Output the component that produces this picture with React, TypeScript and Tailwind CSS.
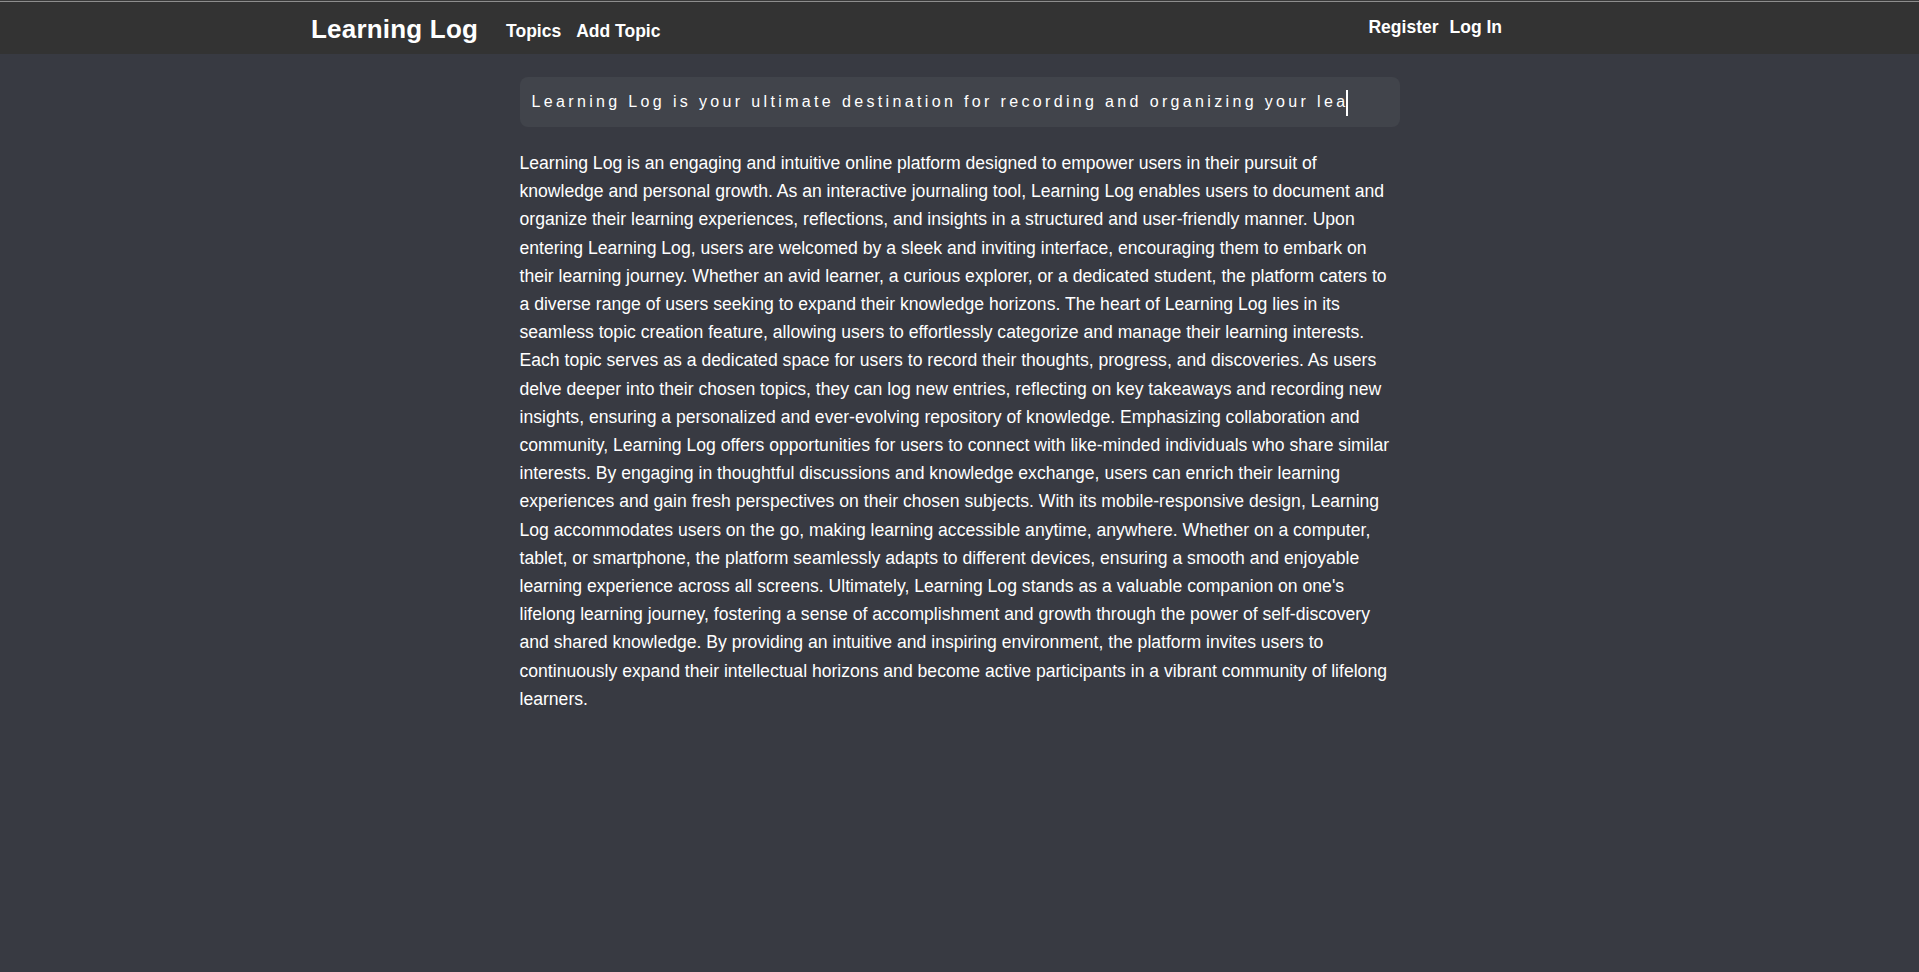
import React from "react";

const para =
  "Learning Log is an engaging and intuitive online platform designed to empower users in their pursuit of knowledge and personal growth. As an interactive journaling tool, Learning Log enables users to document and organize their learning experiences, reflections, and insights in a structured and user-friendly manner. Upon entering Learning Log, users are welcomed by a sleek and inviting interface, encouraging them to embark on their learning journey. Whether an avid learner, a curious explorer, or a dedicated student, the platform caters to a diverse range of users seeking to expand their knowledge horizons. The heart of Learning Log lies in its seamless topic creation feature, allowing users to effortlessly categorize and manage their learning interests. Each topic serves as a dedicated space for users to record their thoughts, progress, and discoveries. As users delve deeper into their chosen topics, they can log new entries, reflecting on key takeaways and recording new insights, ensuring a personalized and ever-evolving repository of knowledge. Emphasizing collaboration and community, Learning Log offers opportunities for users to connect with like-minded individuals who share similar interests. By engaging in thoughtful discussions and knowledge exchange, users can enrich their learning experiences and gain fresh perspectives on their chosen subjects. With its mobile-responsive design, Learning Log accommodates users on the go, making learning accessible anytime, anywhere. Whether on a computer, tablet, or smartphone, the platform seamlessly adapts to different devices, ensuring a smooth and enjoyable learning experience across all screens. Ultimately, Learning Log stands as a valuable companion on one's lifelong learning journey, fostering a sense of accomplishment and growth through the power of self-discovery and shared knowledge. By providing an intuitive and inspiring environment, the platform invites users to continuously expand their intellectual horizons and become active participants in a vibrant community of lifelong learners.";

export default function App() {
  return (
    <div className="min-h-[972px] bg-[#383a42] font-['Liberation_Sans',Arial,sans-serif] text-white">
      <header className="h-[54px] bg-[#333333]">
        <div className="h-px bg-[#3a3a3a]" />
        <div className="h-px bg-[#8e8e8e]" />
        <div className="flex items-start w-[1502px] pl-[311px]">
          <a className="mt-[14px] text-[26px] font-bold leading-none tracking-[0.2px]">Learning Log</a>
          <nav className="flex mt-[21px] ml-[28px] gap-[15px] text-[17.5px] font-bold leading-none">
            <a>Topics</a>
            <a>Add Topic</a>
          </nav>
          <nav className="flex ml-auto mt-[17px] gap-[11px] text-[17.5px] font-bold leading-none">
            <a>Register</a>
            <a>Log In</a>
          </nav>
        </div>
      </header>
      <main className="w-[880px] mx-auto pt-[23px]">
        <div className="h-[50px] rounded-[8px] bg-[#41444b] px-[12px] flex items-center">
          <span className="text-[16px] leading-[50px] tracking-[3.35px] whitespace-nowrap">
            Learning Log is your ultimate destination for recording and organizing your lea
          </span>
          <span className="w-[2px] h-[26px] bg-white ml-[-3px] mt-[2px]" />
        </div>
        <p className="mt-[22px] text-[17.6px] leading-[28.2px]">{para}</p>
      </main>
    </div>
  );
}
